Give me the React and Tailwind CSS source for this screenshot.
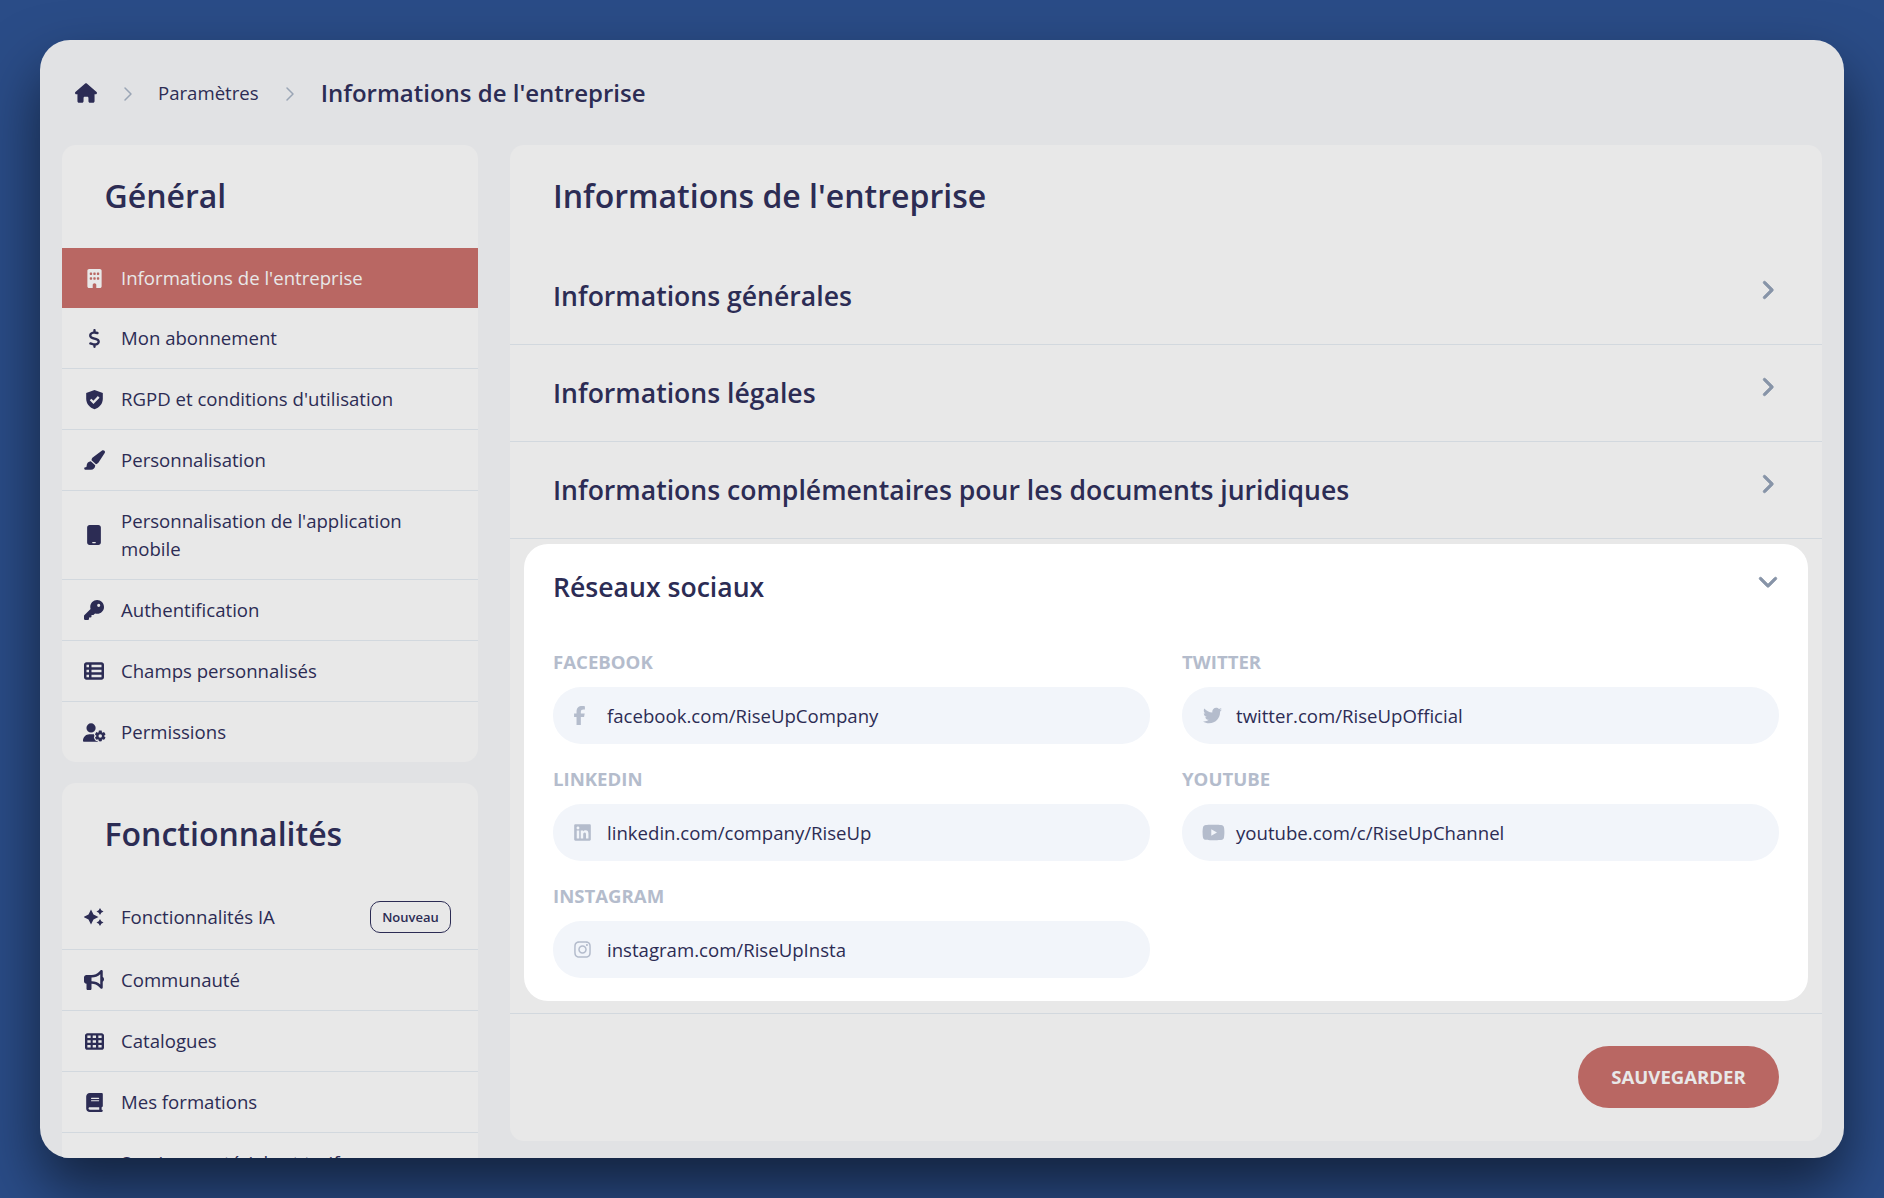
import { ChevronRight } from 'lucide-react'
import {
  FaBook,
  FaBuilding,
  FaBullhorn,
  FaChevronDown,
  FaChevronRight,
  FaDollarSign,
  FaFacebookF,
  FaHouse,
  FaInstagram,
  FaKey,
  FaLinkedin,
  FaMobile,
  FaPaintbrush,
  FaTableCells,
  FaTableList,
  FaTwitter,
  FaUserGear,
  FaYoutube,
} from 'react-icons/fa6'

function ShieldCheck() {
  return (
    <svg viewBox="0 0 24 24" className="h-[21px] w-[21px]">
      <path d="M12 1 21.5 4.6V11c0 5.8-4 10.2-9.5 12C6.500 21.200 2.500 16.800 2.500 11V4.600Z" fill="currentColor" />
      <path d="M7.500 12 10.800 15.200 16.800 9" fill="none" stroke="#e8e8e8" strokeWidth="2.600" />
    </svg>
  )
}

function Sparkles() {
  return (
    <svg viewBox="0 0 20 18" className="h-[18px] w-[20px]" fill="currentColor">
      <path d="M7 1.500 9.500 6.500 14.500 9 9.500 11.500 7 16.500 4.500 11.500 -0.500 9 4.500 6.500Z" />
      <path d="M16 0 17.300 2.200 19.500 3.500 17.300 4.800 16 7 14.700 4.800 12.500 3.500 14.700 2.200Z" />
      <path d="M16 11 17.300 13.200 19.500 14.500 17.300 15.800 16 18 14.700 15.800 12.500 14.500 14.700 13.200Z" />
    </svg>
  )
}

const general = [
  { label: "Informations de l'entreprise", icon: <FaBuilding size={19} />, active: true },
  { label: 'Mon abonnement', icon: <FaDollarSign size={19} /> },
  { label: "RGPD et conditions d'utilisation", icon: <ShieldCheck /> },
  { label: 'Personnalisation', icon: <FaPaintbrush size={22} /> },
  { label: "Personnalisation de l'application mobile", icon: <FaMobile size={20} /> },
  { label: 'Authentification', icon: <FaKey size={20} /> },
  { label: 'Champs personnalisés', icon: <FaTableList size={20} /> },
  { label: 'Permissions', icon: <FaUserGear size={23} /> },
]

const features = [
  { label: 'Fonctionnalités IA', icon: <Sparkles />, badge: 'Nouveau' },
  { label: 'Communauté', icon: <FaBullhorn size={20} /> },
  { label: 'Catalogues', icon: <FaTableCells size={19} /> },
  { label: 'Mes formations', icon: <FaBook size={19} /> },
  { label: 'Services matériels et tarifs', icon: null },
]

const sections = [
  'Informations générales',
  'Informations légales',
  'Informations complémentaires pour les documents juridiques',
]

const socials = [
  { label: 'FACEBOOK', value: 'facebook.com/RiseUpCompany', icon: <FaFacebookF size={19} className="-ml-[3px]" /> },
  { label: 'TWITTER', value: 'twitter.com/RiseUpOfficial', icon: <FaTwitter size={19} className="ml-px" /> },
  { label: 'LINKEDIN', value: 'linkedin.com/company/RiseUp', icon: <FaLinkedin size={19} /> },
  { label: 'YOUTUBE', value: 'youtube.com/c/RiseUpChannel', icon: <FaYoutube size={23} className="shrink-0" /> },
  { label: 'INSTAGRAM', value: 'instagram.com/RiseUpInsta', icon: <FaInstagram size={19} /> },
]

function NavRow({ item, last }) {
  return (
    <div
      className={`flex items-center gap-[13px] pl-[18px] pr-[27px] text-[18.6px] leading-[28px] ${
        item.active ? 'bg-[#b96763] text-[#e8e8e8]' : 'text-[#2c2c54]'
      } ${!item.active && !last ? 'border-b border-[#d2d8de]' : ''} ${item.badge ? 'pb-4 pt-[15px]' : 'py-4'}`}
    >
      <span className="flex w-7 shrink-0 items-center justify-center">{item.icon}</span>
      <span className="flex-1 pr-[30px]">{item.label}</span>
      {item.badge && (
        <span className="flex h-8 w-[81px] shrink-0 items-center justify-center rounded-[10px] border border-[#2c2c54] text-[13px] font-semibold">
          {item.badge}
        </span>
      )}
    </div>
  )
}

function NavCard({ title, items, className }) {
  return (
    <div className={`overflow-hidden rounded-[14px] bg-[#e8e8e8] ${className || ''}`}>
      <h2 className="pb-[33px] pl-[42.5px] pt-8 text-[32px] font-semibold leading-[38px] text-[#2c2c54]">{title}</h2>
      {items.map((item, i) => (
        <NavRow key={item.label} item={item} last={i === items.length - 1} />
      ))}
    </div>
  )
}

function SocialField({ label, value, icon }) {
  return (
    <div>
      <div className="mb-[13px] text-[18.6px] font-bold leading-[24px] text-[#b4bccc]">{label}</div>
      <div className="flex h-[57px] items-center gap-[14px] rounded-[28px] bg-[#f2f5fa] pl-5 text-[18.6px] text-[#2c2c54]">
        <span className="flex w-5 shrink-0 items-center justify-start text-[#b4bccc]">{icon}</span>
        {value}
      </div>
    </div>
  )
}

export default function App() {
  return (
    <div className="h-[1198px] overflow-hidden bg-[#2a4c87] p-10 font-['Open_Sans',sans-serif]">
      <div className="h-[1118px] overflow-hidden rounded-[30px] bg-[#e1e2e4] px-[22px] shadow-[0_30px_60px_rgba(0,0,0,0.55)]">
        <div className="flex h-[105px] items-center gap-[19px] pl-[13px] text-[18.6px] text-[#2c2c54]">
          <FaHouse size={22} />
          <ChevronRight size={24} strokeWidth={1.5} className="mt-0.5 text-[#9aa5b5]" />
          <span className="-ml-px mt-px">Paramètres</span>
          <ChevronRight size={24} strokeWidth={1.5} className="mt-0.5 text-[#9aa5b5]" />
          <span className="text-[24px] font-semibold">Informations de l'entreprise</span>
        </div>
        <div className="flex items-start gap-8">
          <div className="w-[416px] shrink-0">
            <NavCard title="Général" items={general} className="mb-[21px]" />
            <NavCard title="Fonctionnalités" items={features} />
          </div>
          <div className="min-w-0 flex-1 rounded-[14px] bg-[#e8e8e8]">
            <h1 className="pb-[33px] pl-[43px] pt-8 text-[32px] font-semibold leading-[38px] text-[#2c2c54]">
              Informations de l'entreprise
            </h1>
            {sections.map(title => (
              <div
                key={title}
                className="flex h-[97px] items-center justify-between border-b border-[#d2d8de] pl-[43px] pr-[45px] text-[#2c2c54]"
              >
                <span className="mt-0.5 text-[26.6px] font-semibold">{title}</span>
                <FaChevronRight size={20} stroke="currentColor" strokeWidth={24} className="mb-3 text-[#8794a8]" />
              </div>
            ))}
            <div className="mx-[14px] mt-[5px] rounded-[24px] bg-white pb-[23px] pl-[29px] pr-[29px] pt-6">
              <div className="flex items-start justify-between pb-[44px] text-[#2c2c54]">
                <span className="text-[26.6px] font-semibold leading-[38px]">Réseaux sociaux</span>
                <FaChevronDown size={20} stroke="currentColor" strokeWidth={24} className="mr-px mt-[3px] text-[#8794a8]" />
              </div>
              <div className="grid grid-cols-2 gap-x-8 gap-y-[23px]">
                {socials.map(s => (
                  <SocialField key={s.label} {...s} />
                ))}
              </div>
            </div>
            <div className="mt-3 flex justify-end border-t border-[#d2d8de] pb-[33px] pr-[43px] pt-8">
              <button className="h-[62px] w-[201px] rounded-[31px] bg-[#b96763] text-[18.6px] font-bold text-[#e8e8e8]">
                SAUVEGARDER
              </button>
            </div>
          </div>
        </div>
      </div>
    </div>
  )
}
